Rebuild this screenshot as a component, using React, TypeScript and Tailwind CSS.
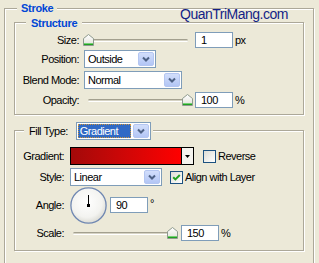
import React from "react";

const Thumb = () => (
  <svg width="11" height="12" viewBox="0 0 11 12" className="block">
    <defs>
      <linearGradient id="thumbg" x1="0" y1="0" x2="0" y2="1">
        <stop offset="0" stopColor="#ffffff" />
        <stop offset="1" stopColor="#e2e2da" />
      </linearGradient>
    </defs>
    <path d="M0.5 4.5 L5.5 0.5 L10.5 4.5 L10.5 11.5 L0.5 11.5 Z" fill="url(#thumbg)" stroke="#8e9a8e" />
    <rect x="1" y="9" width="9" height="1" fill="#74d074" />
    <rect x="1" y="10" width="9" height="1" fill="#21a121" />
  </svg>
);

function Slider({ at, className }: { at: "min" | "max"; className: string }) {
  return (
    <div className={`relative h-[12px] shrink-0 ${className}`}>
      <div className="mx-[5px] mt-[5px] h-[3px] rounded-full border-t border-b border-t-[#a3a08f] border-b-white bg-[#d6d3c4]" />
      <div className={`absolute top-0 ${at === "min" ? "left-0" : "right-0"}`}>
        <Thumb />
      </div>
    </div>
  );
}

const Chevron = () => (
  <svg width="8" height="6" viewBox="0 0 8 6" className="block">
    <polyline points="1,1.5 4,4.5 7,1.5" fill="none" stroke="#4d6185" strokeWidth="2" />
  </svg>
);

function DropBtn() {
  return (
    <div className="flex h-full w-[16px] shrink-0 items-center justify-center rounded-[2px] border border-[#b4c6f1] bg-gradient-to-b from-[#d2defb] to-[#b3c6f5]">
      <Chevron />
    </div>
  );
}

function Combo({ className, text, focus }: { className: string; text: string; focus?: boolean }) {
  return (
    <div className={`flex h-[18px] shrink-0 items-center border border-[#7f9db9] bg-white p-px ${className}`}>
      {focus ? (
        <div className="mr-[2px] flex h-full flex-1 items-center border border-dotted border-[#ce953a] bg-[#316ac5] pl-[1px] text-white">
          {text}
        </div>
      ) : (
        <div className="flex-1 pl-[2px]">{text}</div>
      )}
      <DropBtn />
    </div>
  );
}

function Field({ text }: { text: string }) {
  return (
    <div className="flex h-[16px] w-[38px] shrink-0 items-center border border-[#7f9db9] bg-white pl-[5px]">
      {text}
    </div>
  );
}

function Check({ checked }: { checked?: boolean }) {
  return (
    <div className="flex h-[13px] w-[13px] shrink-0 items-center justify-center border border-[#1c5180] bg-gradient-to-br from-[#dcdcd5] to-white">
      {checked && (
        <svg width="9" height="9" viewBox="0 0 9 9" className="block">
          <polyline points="1.2,4.2 3.4,6.4 7.8,2" fill="none" stroke="#21a121" strokeWidth="2" />
        </svg>
      )}
    </div>
  );
}

const Dial = () => (
  <svg width="37" height="37" viewBox="0 0 37 37" className="block">
    <defs>
      <radialGradient id="dialg" cx="0.45" cy="0.4" r="0.62">
        <stop offset="0" stopColor="#ffffff" />
        <stop offset="0.7" stopColor="#f3f3f0" />
        <stop offset="1" stopColor="#d9d9d2" />
      </radialGradient>
    </defs>
    <circle cx="18.5" cy="18.5" r="17.6" fill="url(#dialg)" stroke="#6f87b2" strokeWidth="1.3" />
    <line x1="18.5" y1="8" x2="18.5" y2="18" stroke="#000" strokeWidth="1" />
    <rect x="17" y="17" width="3" height="3" fill="#000" />
  </svg>
);

const box =
  "relative border border-[#aca899] shadow-[inset_1px_1px_0_#fff,1px_1px_0_#fff]";

export default function App() {
  return (
    <div className="h-[263px] w-[319px] overflow-hidden bg-[#ece9d8] pl-[4px] pt-[8px] font-['Liberation_Sans',Arial,sans-serif] text-[11px] leading-[13px] tracking-[-0.5px] text-black">
      <div className={`${box} h-[280px] w-[310px] px-[9px] pt-[13px]`}>
        <span className="absolute left-[12px] top-[-7px] bg-[#ece9d8] px-[4px] font-bold tracking-[-0.3px] text-[#0046d5]">
          Stroke
        </span>
        <span className="absolute left-[175px] top-[-3px] text-[14px] leading-[16px] tracking-[-0.5px] text-[#131f86]">
          QuanTriMang.com
        </span>

        {/* Structure */}
        <div className={`${box} flex h-[93px] w-[290px] flex-col`}>
          <span className="absolute left-[11px] top-[-6px] bg-[#ece9d8] px-[5px] font-bold tracking-[-0.3px] text-[#0046d5]">
            Structure
          </span>

          <div className="mt-[9px] flex h-[16px] items-center">
            <div className="w-[64px] shrink-0 text-right">Size:</div>
            <Slider at="min" className="ml-[4px] w-[110px]" />
            <div className="ml-[2px]">
              <Field text="1" />
            </div>
            <div className="ml-[2px]">px</div>
          </div>

          <div className="mt-[2px] flex h-[18px] items-center">
            <div className="w-[64px] shrink-0 text-right">Position:</div>
            <Combo className="ml-[5px] w-[72px]" text="Outside" />
          </div>

          <div className="mt-[3px] flex h-[18px] items-center">
            <div className="w-[64px] shrink-0 text-right">Blend Mode:</div>
            <Combo className="ml-[5px] w-[98px]" text="Normal" />
          </div>

          <div className="mt-[3px] flex h-[16px] items-center">
            <div className="w-[64px] shrink-0 text-right">Opacity:</div>
            <Slider at="max" className="ml-[4px] w-[110px]" />
            <div className="ml-[2px]">
              <Field text="100" />
            </div>
            <div className="ml-[2px]">%</div>
          </div>
        </div>

        {/* Fill */}
        <div className={`${box} mt-[15px] flex h-[121px] w-[290px] flex-col`}>
          <div className="absolute left-[9px] top-[-9px] flex items-center bg-[#ece9d8] pl-[5px] pr-[2px]">
            <span>Fill Type:</span>
            <Combo className="ml-[8px] w-[75px]" text="Gradient" focus />
          </div>

          <div className="mt-[16px] flex h-[18px] items-center">
            <div className="w-[49px] shrink-0 text-right">Gradient:</div>
            <div className="ml-[6px] flex h-[18px] w-[124px] shrink-0 border border-black bg-white">
              <div className="flex-1 border-r border-black bg-gradient-to-r from-[#a30909] to-[#ff0000]" />
              <div className="flex w-[11px] items-center justify-center bg-[#f4f3ee]">
                <svg width="5" height="3" viewBox="0 0 5 3" className="block">
                  <path d="M0 0H5L2.5 3Z" fill="#000" />
                </svg>
              </div>
            </div>
            <div className="ml-[9px]">
              <Check />
            </div>
            <div className="ml-[2px]">Reverse</div>
          </div>

          <div className="mt-[3px] flex h-[18px] items-center">
            <div className="w-[49px] shrink-0 text-right">Style:</div>
            <Combo className="ml-[6px] w-[92px]" text="Linear" />
            <div className="ml-[8px]">
              <Check checked />
            </div>
            <div className="ml-[2px]">Align with Layer</div>
          </div>

          <div className="mt-[1px] flex h-[37px] items-start">
            <div className="mt-[10px] flex h-[16px] w-[49px] shrink-0 items-center justify-end">Angle:</div>
            <div className="ml-[6px] shrink-0">
              <Dial />
            </div>
            <div className="ml-[3px] mt-[10px]">
              <Field text="90" />
            </div>
            <div className="ml-[2px] mt-[10px]">°</div>
          </div>

          <div className="mt-[1px] flex h-[16px] items-center">
            <div className="w-[49px] shrink-0 text-right">Scale:</div>
            <Slider at="max" className="ml-[4px] w-[110px]" />
            <div className="ml-[3px]">
              <Field text="150" />
            </div>
            <div className="ml-[2px]">%</div>
          </div>
        </div>
      </div>
    </div>
  );
}
